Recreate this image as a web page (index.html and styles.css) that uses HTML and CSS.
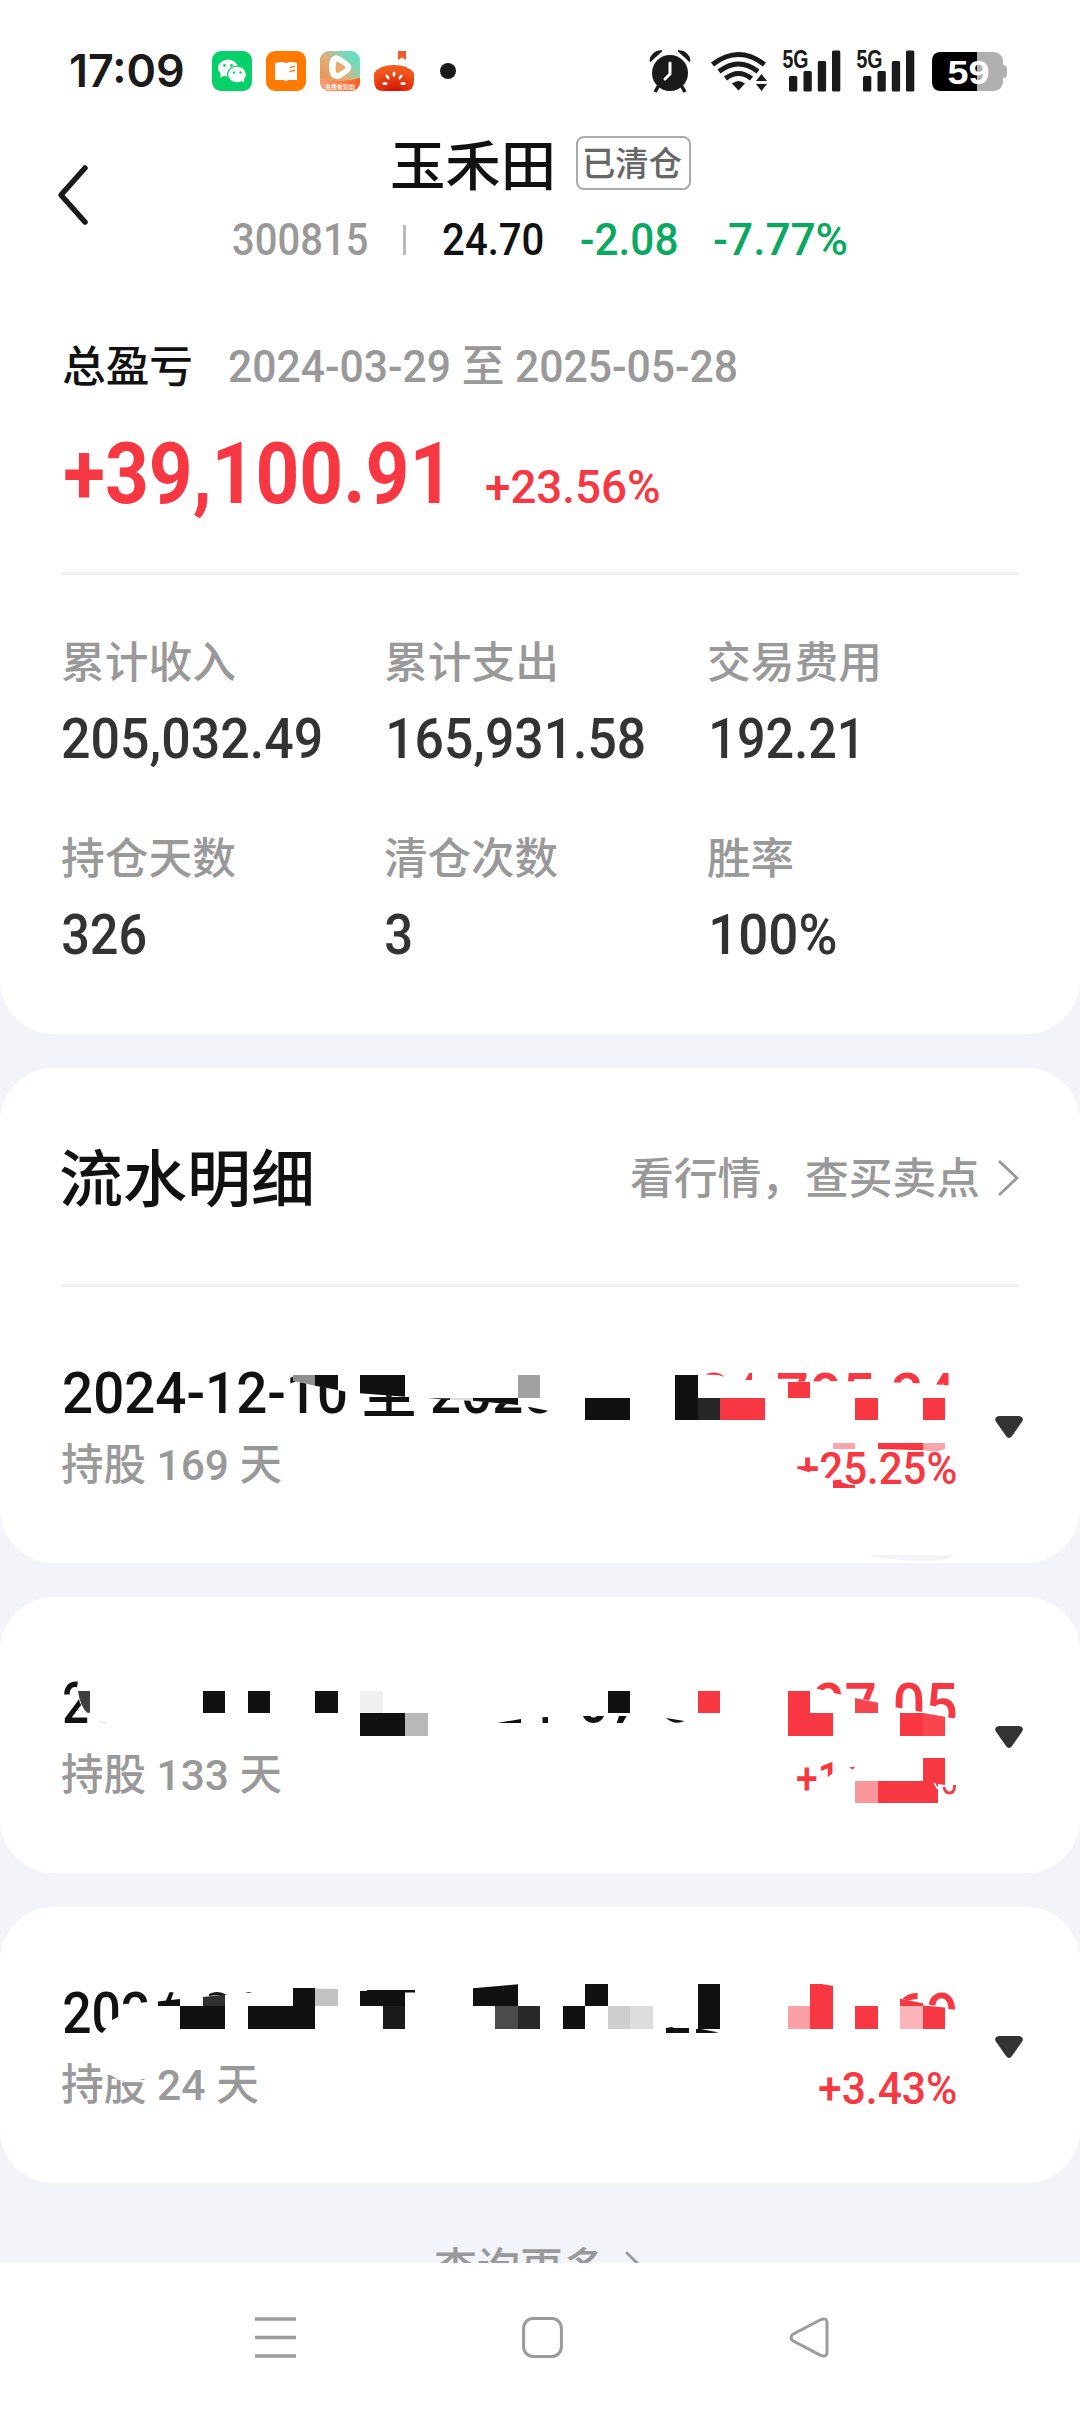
FILE: index.html
```html
<!DOCTYPE html>
<html lang="zh-CN">
<head>
<meta charset="utf-8">
<title>玉禾田 已清仓</title>
<link rel="stylesheet" href="styles.css">
</head>
<body>
<div class="screen">
  <main class="content">
    <section class="card card-top">
      <div class="statusbar">
        <span class="time fit" data-w="112"><span>17:09</span></span>
        <div class="apps">
          <svg width="40" height="40" viewBox="0 0 40 40"><rect width="40" height="40" rx="9" fill="#06d168"/><ellipse cx="16" cy="17" rx="10" ry="8.600" fill="#fff"/><path d="M9 22l-1 5 5-3z" fill="#fff"/><ellipse cx="25" cy="23.500" rx="9.500" ry="8.300" fill="#fff" stroke="#06d168" stroke-width="1.300"/><path d="M29 29l3 3v-5z" fill="#fff"/><g fill="#06d168"><circle cx="12.500" cy="14.500" r="1.400"/><circle cx="19.500" cy="14.500" r="1.400"/><circle cx="22" cy="21.500" r="1.200"/><circle cx="28.500" cy="21.500" r="1.200"/></g></svg>
          <svg width="40" height="40" viewBox="0 0 40 40"><rect width="40" height="40" rx="9" fill="#ff7a00"/><path d="M9 12q6-2 11 0 5-2 11 0v17H22l-2 1.500-2-1.500H9z" fill="#fff"/><path d="M23.500 17q3-2 5.500-1.500M23.500 21q3-2 5.500-1.500" stroke="#ff7a00" stroke-width="1.500" fill="none"/></svg>
          <svg width="40" height="40" viewBox="0 0 40 40"><defs><linearGradient id="sky" x1="0" y1="1" x2="1" y2="0"><stop offset="0" stop-color="#f2843f"/><stop offset=".5" stop-color="#dcb27c"/><stop offset=".8" stop-color="#6bdcc0"/></linearGradient><linearGradient id="base"><stop offset="0" stop-color="#f9a077"/><stop offset="1" stop-color="#ff5a1a"/></linearGradient><clipPath id="appclip"><rect width="40" height="40" rx="9"/></clipPath></defs><g clip-path="url(#appclip)"><rect width="40" height="40" fill="url(#sky)"/><path d="M0 27q20 6 40 0v13H0z" fill="url(#base)"/></g><path d="M11 7q4-5 10-1l8 6q5 4 0 9l-8 6q-6 3-10-2-4-9 0-18z" fill="#fff"/><path d="M16 12q1-2 3-.5l6 4q1 1 0 2l-6 4q-2 1-3-.5-1-4 0-9z" fill="#e8a765"/><text x="20" y="37.500" class="tiny">免费看短剧</text></svg>
          <svg width="40" height="40" viewBox="0 0 40 40"><defs><radialGradient id="tomato" cx=".5" cy="1" r=".8"><stop offset="0" stop-color="#cf1100"/><stop offset="1" stop-color="#f4581c"/></radialGradient></defs><path d="M0 22Q6 14 20 14t20 8v8q0 10-9 10H9q-9 0-9-10z" fill="url(#tomato)"/><path d="M24 0h8v9l-4-2.500L24 9z" fill="#ef5a2a"/><g fill="#fff"><ellipse cx="20" cy="23" rx="1.500" ry="2.800"/><ellipse cx="13.500" cy="26" rx="1.500" ry="2.800" transform="rotate(-35 13.500 26)"/><ellipse cx="26.500" cy="26" rx="1.500" ry="2.800" transform="rotate(35 26.500 26)"/><ellipse cx="11" cy="32.500" rx="2.800" ry="1.500"/><ellipse cx="29" cy="32.500" rx="2.800" ry="1.500"/></g></svg>
        </div>
        <span class="dot"></span>
        <svg class="sys" width="358" height="44" viewBox="649 48 358 44">
          <g fill="#1a1a1a">
            <circle cx="670" cy="72" r="18"/>
            <path d="M649.500 60q1-10 12-11l1 1-12 11zM690.500 60q-1-10-12-11l-1 1 12 11z"/>
            <path d="M659 84l-4 7M681 84l4 7" stroke="#1a1a1a" stroke-width="3.500"/>
            <path d="M670 62v11l-5 5" fill="none" stroke="#fff" stroke-width="3" stroke-linecap="round"/>
            <g fill="none" stroke="#1a1a1a" stroke-width="5"><path d="M712.500 63.500q26-20 52 0"/><path d="M719 70.500q19.500-15 39 0"/><path d="M725.500 77.500q13-10 26 0"/></g>
            <path d="M732 82.500q6.500-5 13 0l-6.500 7z"/>
            <path d="M756 80l5.500-7 5.500 7zM756 83l5.500 7 5.500-7z"/>
            <g id="bars"><rect x="789" y="75" width="8.300" height="15.500" rx="1.500"/><rect x="803.500" y="70" width="8.300" height="20.500" rx="1.500"/><rect x="817.800" y="60" width="8.300" height="30.500" rx="1.500"/><rect x="832" y="49.500" width="8.300" height="41" rx="1.500"/><text x="782.500" y="66.500" class="net" textLength="26" lengthAdjust="spacingAndGlyphs">5G</text></g>
            <use href="#bars" x="74"/>
          </g>
          <rect x="932" y="51" width="71" height="39" rx="9" fill="#b0b0b0"/>
          <path d="M1003 64q4 0 4 4v5q0 4-4 4z" fill="#b0b0b0"/>
          <path d="M977 51h-36q-9 0-9 9v21q0 9 9 9h36z" fill="#000"/>
          <text x="947.500" y="82.500" class="pow" textLength="42" lengthAdjust="spacingAndGlyphs">59</text>
        </svg>
      </div>

      <header class="header">
        <svg class="back" width="32" height="62" viewBox="0 0 32 62"><path d="M28 4L4 31l24 27" fill="none" stroke="#1a1a1a" stroke-width="5.500" stroke-linecap="round" stroke-linejoin="round"/></svg>
        <div class="heading">
          <div class="title-row">
            <h1 class="title fit" data-w="160"><span>玉禾田</span></h1>
            <span class="badge"><span class="fit" data-w="97"><span>已清仓</span></span></span>
          </div>
          <div class="quote">
            <span class="code fit" data-w="134"><span>300815</span></span>
            <span class="bar"></span>
            <span class="price fit" data-w="100"><span>24.70</span></span>
            <span class="down fit" data-w="96"><span>-2.08</span></span>
            <span class="down pct-down fit" data-w="133"><span>-7.77%</span></span>
          </div>
        </div>
      </header>

      <div class="profit">
        <div class="profit-head">
          <span class="label fit" data-w="128"><span>总盈亏</span></span>
          <span class="range fit" data-w="507"><span>2024-03-29 至 2025-05-28</span></span>
        </div>
        <div class="profit-value">
          <strong class="total fit" data-w="375"><span>+39,100.91</span></strong>
          <span class="ratio fit" data-w="173"><span>+23.56%</span></span>
        </div>
      </div>

      <dl class="stats">
        <div><dt class="fit" data-w="173"><span>累计收入</span></dt><dd class="fit" data-w="258"><span>205,032.49</span></dd></div>
        <div><dt class="fit" data-w="170"><span>累计支出</span></dt><dd class="one fit" data-w="255"><span>165,931.58</span></dd></div>
        <div><dt class="fit" data-w="170"><span>交易费用</span></dt><dd class="one fit" data-w="144"><span>192.21</span></dd></div>
        <div><dt class="fit" data-w="173"><span>持仓天数</span></dt><dd class="fit" data-w="83"><span>326</span></dd></div>
        <div><dt class="fit" data-w="172"><span>清仓次数</span></dt><dd class="fit" data-w="25"><span>3</span></dd></div>
        <div><dt class="fit" data-w="84"><span>胜率</span></dt><dd class="one fit" data-w="124"><span>100%</span></dd></div>
      </dl>
    </section>

    <section class="card">
      <div class="section-head">
        <h2 class="fit" data-w="250"><span>流水明细</span></h2>
        <a class="more-link"><span class="fit" data-w="348"><span>看行情，查买卖点</span></span><svg width="22" height="40" viewBox="0 0 22 40"><path d="M2 2l18 17L2 36" fill="none" stroke="#999" stroke-width="2.800"/></svg></a>
      </div>
      <article class="record">
        <div class="period">
          <span class="date fit" data-w="489"><span>2024-12-10 至 2025</span></span>
          <span class="days fit" data-w="219"><span>持股 169 天</span></span>
        </div>
        <div class="gain">
          <span class="amount fit" data-w="290"><span>+24,705.24</span></span>
          <span class="rate fit" data-w="159"><span>+25.25%</span></span>
        </div>
        <svg class="toggle" width="28" height="22" viewBox="0 0 28 22"><path d="M4 0h20q5 1 3.500 5L17 20q-3 4-6 0L.5 5Q-1 1 4 0z" fill="#333"/></svg>
        <svg class="mosaic" viewBox="0 0 1080 276">
          <g fill="#fff"><path d="M293 80v13.700l53 11 14 1.600 52 3.400 16 1.600 42 2.200 48 4.200 30 6 27 4.300V80z"/><path d="M650 82h48v5.500l20 .5 17 5h30l15 2 60-1 40 1 45 1.500 25 2h10v44H650z"/><path d="M730 82h10v12h-10zM752 82h12v12h-12zM924 82h10v18h-10zM948.500 82h9v18h-9z"/><path d="M796 181.500l4 1 15 4.500 12 4 8 2v11h-39z"/></g>
          <g fill="#111"><path d="M125 87.800l27 .5-7 1.200-10-.5zM315 88h23v15l-23-4.300zM360 88h45v21.700l-45-3.400zM428 111.300h22v1.700zM473 111h45v7l-45-4.300zM585 111h45v22h-45zM675 88h23v45h-23z"/></g>
          <path d="M293 88h22v10.700l-22-5z" fill="#8f8f8f"/><path d="M450 111h23v2.700l-23-1z" fill="#ddd"/><path d="M518 88h22v23h-22z" fill="#a0a0a0"/><path d="M698 111h22v22h-22z" fill="#262626"/>
          <path d="M720 111h45v22h-45zM788 95h22v16h-22zM855 111h23v22h-23zM923 111h22v22h-22zM878 156h45v7.300l-45-1.300zM833 193l11 3q7 3 11 1.500v3.500h-22z" fill="#f73842"/>
          <path d="M833 156h22v6h-22zM923 156h22v6q-10 4-22 1z" fill="#f9a5aa"/>
          <path d="M864 268h91q-10 6-25 6-35 0-66-6z" fill="#f3f4f9"/>
        </svg>
      </article>
    </section>

    <section class="card">
      <article class="record">
        <div class="period">
          <span class="date fit" data-w="24"><span>2</span></span>
          <span class="days fit" data-w="219"><span>持股 133 天</span></span>
        </div>
        <div class="gain">
          <span class="amount fit" data-w="142"><span>27.05</span></span>
          <span class="rate rate-cut fit" data-w="36"><span>+1</span></span>
        </div>
        <svg class="toggle" width="28" height="22" viewBox="0 0 28 22"><path d="M4 0h20q5 1 3.500 5L17 20q-3 4-6 0L.5 5Q-1 1 4 0z" fill="#333"/></svg>
        <svg class="mosaic" viewBox="0 0 1080 276">
          <g fill="#fff"><path d="M78.500 80H95v36h-9l-6-10-3.500-12z"/><path d="M810 90l28 7 8 2 32 6 17 5.300 26 4.400 24 5 12 2.300v20H810z"/><path d="M820 178l8 2 6-5v28h-14z"/></g>
          <path d="M78 94h12v21.700h-3q-7-7-9-21.700z" fill="#404040"/>
          <g fill="#111"><path d="M203 94h22v22h-22zM248 94h22v22h-22zM315 94h23v22h-23zM360 116h45v23h-45zM497 126l24-4v4zM542.500 120.300l5.500-.3v6h-5.500zM608 94h22v22h-22zM583 119h7q3.500 3 7 0h7q-3 7-10.500 7t-10.500-7zM619 119h7.700l-4 7h-6zM666 121l18.500 3q-10 4.500-18.500-3z"/></g>
          <path d="M360 94h23v22h-23z" fill="#f0f0f0"/><path d="M405 116h23v23h-23z" fill="#b8b8b8"/><path d="M99 124.500l8 1.500" stroke="#ddd"/>
          <path d="M698 94h22v22h-22zM788 94h22v22h23v23h-45zM900 116h23v23h-23zM878 184h45v-23h22v27l-7-1 0 19h-60zM849 170.500l6-1-2 3z" fill="#f73842"/>
          <path d="M855 101l23 4.700V116h-23zM923 116l22 3.700V139h-22z" fill="#f8454e"/>
          <path d="M855 184h23v22h-23z" fill="#fb969b"/>
          <path d="M934 186l4 6" stroke="#fff" stroke-width="1.500"/>
          <path d="M944 190q1 6 5.500 6t5-6v-2" fill="none" stroke="#ef3f49" stroke-width="3"/>
        </svg>
      </article>
    </section>

    <section class="card">
      <article class="record">
        <div class="period">
          <span class="date fit" data-w="85"><span>202</span></span>
          <span class="days fit" data-w="196"><span>持股 24 天</span></span>
        </div>
        <div class="gain">
          <span class="amount fit" data-w="60"><span>69</span></span>
          <span class="rate fit" data-w="137"><span>+3.43%</span></span>
        </div>
        <svg class="toggle" width="28" height="22" viewBox="0 0 28 22"><path d="M4 0h20q5 1 3.500 5L17 20q-3 4-6 0L.5 5Q-1 1 4 0z" fill="#333"/></svg>
        <svg class="mosaic" viewBox="0 0 1080 276">
          <g fill="#fff"><path d="M100 128l4-4 8-11 6-3 6-13 25-2h6v35h-55z"/><path d="M890 90l33 6 25 6 10 1v33h-68z"/><path d="M106.500 150h41v21l-17 4-12-2-8-5h-4z"/></g>
          <g fill="#111"><path d="M158 94.500l8-1 3.500-8.200h4.100L171 93l9-1v7h45v23h-45V99h-22zM209 87q9-4.500 18 1h-5q-6-.5-13 1zM248 99h45V81h22v41h-67zM360 84h7v-1h48v2.500h-10V99h-45zM473 81.300l45-4V99h-45zM563 99h22v23h-22zM585 77h23v22h-23zM666 121l6-1 2 1h15v5h-23zM698 77h22v45h-22zM696 122h5l18 3.500-7 .5h-16z"/><path d="M245 86q4-1.500 7 0z"/></g>
          <path d="M203 90l22-2.500V99h-22z" fill="#303030"/><path d="M495 99h23v23h-23z" fill="#4b4b4b"/><path d="M518 99h22v23h-22z" fill="#282828"/><path d="M383 99h22v23h-22z" fill="#1b1b1b"/><path d="M315 81.500l23 .5v17h-23z" fill="#c2c2c2"/><path d="M608 99h22v23h-22z" fill="#cecece"/><path d="M630 99h23v23h-23z" fill="#ddd"/>
          <path d="M788 99h22v23h-22z" fill="#fba1a6"/><path d="M900 99h23v23h-23z" fill="#fcb4b8"/>
          <path d="M810 77h12l11 2v43h-23zM855 99h23v23h-23zM900 91.700l23 4.600V99h-23zM923 98.500l22 2V122h-22z" fill="#f73842"/>
        </svg>
      </article>
    </section>

    <div class="load-more"><span class="fit" data-w="169"><span>查询更多</span></span><svg width="20" height="36" viewBox="0 0 20 36"><path d="M2 2l16 16L2 34" fill="none" stroke="#999" stroke-width="2.800" stroke-linecap="round"/></svg></div>
  </main>

  <nav class="navbar">
    <svg width="41" height="41" viewBox="0 0 41 41"><path d="M0 2h41M0 20.500h41M0 39h41" stroke="#9b9b9b" stroke-width="3.500"/></svg>
    <svg width="41" height="41" viewBox="0 0 41 41"><rect x="1.600" y="1.600" width="37.800" height="37.800" rx="9.500" fill="none" stroke="#9b9b9b" stroke-width="3"/></svg>
    <svg width="41" height="41" viewBox="0 0 41 41"><path d="M32 2.500L3.500 17.500q-3 3 0 6L32 38.500q6 2 6-3v-30q0-5-6-3z" fill="none" stroke="#9b9b9b" stroke-width="3"/></svg>
  </nav>
</div>
<script src="fit.js"></script>
</body>
</html>
```
FILE: styles.css
```css
* { box-sizing: border-box; }
body { margin: 0; background: #fff; }
.screen {
  display: flex;
  flex-direction: column;
  width: 1080px;
  height: 2411px;
  overflow: hidden;
  color: #111;
  font-family: Roboto, "Noto Sans CJK SC", sans-serif;
  font-weight: 500;
}
h1, h2, dl, dd { margin: 0; font-weight: 500; }
svg { display: block; flex: none; overflow: visible; }

/* a text whose drawn width is fixed by its data-w */
.fit { display: block; flex: none; white-space: nowrap; }
.fit > span { display: inline-block; transform-origin: 0 50%; }

.content {
  display: flex;
  flex-direction: column;
  gap: 34px;
  height: 2263px;
  overflow: hidden;
  background: #f3f4f9;
}
.card { flex: none; background: #fff; border-radius: 54px; }
.card-top { height: 1034px; border-radius: 0 0 54px 54px; }

.statusbar {
  display: flex;
  align-items: center;
  height: 120px;
  padding: 21px 73px 0 71px;
}
.time { font: 600 45px/60px Inter, sans-serif; color: #1a1a1a; }
.apps { display: flex; gap: 14px; margin-left: 29px; }
.dot { width: 16px; height: 16px; margin-left: 26px; border-radius: 50%; background: #1a1a1a; }
.sys { margin-left: auto; }
.tiny { font: 500 6px "Noto Sans CJK SC", sans-serif; fill: #fff; text-anchor: middle; }
.net { font: 700 25px "Liberation Sans", sans-serif; }
.pow { font: 700 33px "Liberation Sans", sans-serif; fill: #fff; }

.header { display: flex; height: 180px; }
.back { margin: 44px 0 0 57px; }
.heading { flex: 1; padding-top: 16px; }
.title-row { display: flex; height: 54px; margin-left: 303px; gap: 24px; }
.title { font-size: 54px; line-height: 63px; }
.badge {
  display: flex;
  justify-content: center;
  width: 115px;
  height: 54px;
  border: 2px solid #aaa;
  border-radius: 8px;
  font-size: 34px;
  line-height: 53px;
  color: #666;
}
.quote {
  display: flex;
  align-items: center;
  height: 48px;
  margin: 26px 0 0 144px;
  font-size: 45px;
  line-height: 50px;
}
.code { color: #999; }
.bar { width: 3px; height: 30px; margin: 0 37px 0 36px; background: #bbb; }
.down { margin-left: 38px; color: #0aa860; }
.pct-down { margin-left: 37px; }

.profit { height: 275px; margin: 0 61px; padding-top: 36px; border-bottom: 3px solid #eee; }
.profit-head { display: flex; padding-left: 2px; gap: 38px; height: 62px; line-height: 62px; }
.label { font-size: 43px; }
.range { font-size: 44px; color: #999; }
.profit-value { display: flex; align-items: baseline; gap: 46px; padding: 26px 0 0 4px; color: #f73842; }
.total { font-size: 85px; line-height: 100px; font-weight: 700; }
.ratio { font-size: 47px; }

.stats { display: grid; grid-template-columns: 323px 323px 300px; grid-auto-rows: 196px; padding: 56px 0 0 62px; }
.stats dt { font-size: 43px; line-height: 64px; color: #999; }
.stats dd { margin: 10px 0 0 1px; font-size: 55px; line-height: 68px; color: #333; }
.stats .one { margin-left: 4px; }

.section-head {
  display: flex;
  justify-content: space-between;
  align-items: center;
  height: 219px;
  margin: 0 61px;
  padding-top: 6px;
  border-bottom: 3px solid #eee;
}
.section-head h2 { padding-top: 4px; font-size: 62px; line-height: 80px; }
.more-link { display: flex; align-items: center; gap: 18px; color: #999; font-size: 43px; line-height: 60px; }

.record { position: relative; display: flex; height: 276px; padding: 72px 57px 0 62px; }
.period { flex: 1; }
.date { margin-left: 2px; font-size: 57px; line-height: 70px; }
.days { margin-top: 6px; font-size: 43px; line-height: 60px; color: #999; }
.gain { display: flex; flex-direction: column; align-items: flex-end; color: #f73842; }
.amount { font-size: 61px; line-height: 74px; }
.rate { margin-top: 6px; font-size: 44px; line-height: 60px; }
.rate-cut { margin-right: 123px; }
.toggle { margin: 57px 0 0 39px; }
.mosaic { position: absolute; left: 0; top: 0; width: 1080px; height: 276px; }

.load-more {
  display: flex;
  justify-content: center;
  align-items: center;
  gap: 21px;
  flex: none;
  height: 60px;
  margin-top: 22px;
  color: #999;
  font-size: 43px;
  line-height: 62px;
}

.navbar { display: flex; justify-content: space-between; height: 148px; padding: 54px 250px 0 255px; background: #fff; }
```
FILE: fit.js
```js
// Scales each .fit text horizontally so that its ink is data-w pixels wide.
const ctx = document.createElement('canvas').getContext('2d');
for (const box of document.querySelectorAll('.fit')) {
  const text = box.firstElementChild;
  const width = Number(box.dataset.w);
  const style = getComputedStyle(text);
  ctx.font = `${style.fontWeight} ${style.fontSize} ${style.fontFamily}`;
  const m = ctx.measureText(text.textContent);
  const scale = width / (m.actualBoundingBoxRight + m.actualBoundingBoxLeft);
  box.style.width = `${width}px`;
  text.style.transform = `translateX(${m.actualBoundingBoxLeft * scale}px) scaleX(${scale})`;
}
```
